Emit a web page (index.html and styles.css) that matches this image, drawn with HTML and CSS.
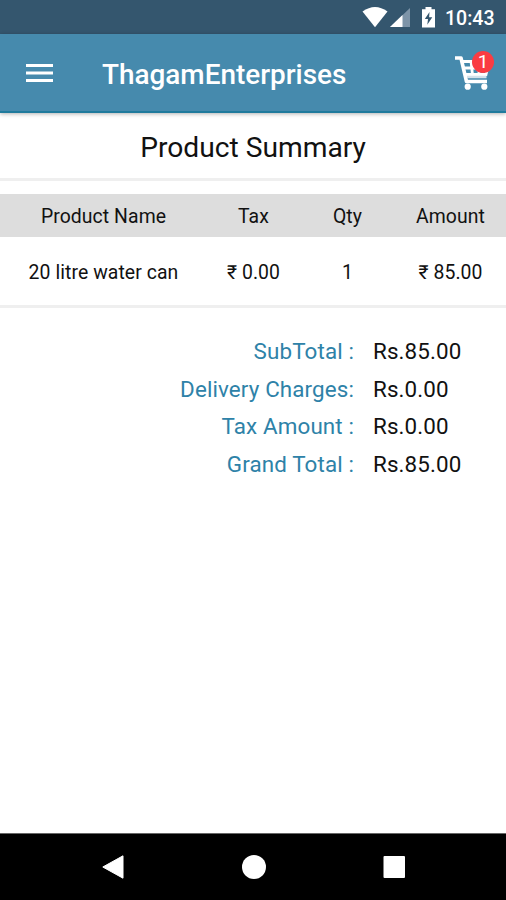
FILE: index.html
```
<!DOCTYPE html>
<html lang="en">
<head>
<meta charset="utf-8">
<meta name="viewport" content="width=device-width">
<title>ThagamEnterprises</title>
<link rel="stylesheet" href="styles.css">
</head>
<body>
<div class="status">
  <svg class="status-icons" width="76" height="34" viewBox="0 0 76 34" aria-hidden="true">
    <path fill="#fff" d="M0.500 11.500Q13 2.500 25.500 11.500L13 27.200Z"/>
    <path fill="#7d94a8" d="M48 8V27H28Z"/>
    <path fill="#fff" d="M40.500 15.100V27H28Z"/>
    <path fill="#fff" d="M63.500 7H69.500V9.300H73V27.500H60V9.300H63.500Z"/>
    <path fill="#34566e" d="M67.500 12L62.800 19H66L65.300 24.800L70.300 17.300H67.100Z"/>
  </svg>
  <span class="clock">10:43</span>
</div>
<header class="appbar">
  <svg class="menu" width="27" height="20" viewBox="0 0 27 20" aria-hidden="true"><path fill="#fff" d="M0 1H27V4H0ZM0 8.500H27V11.500H0ZM0 16H27V19H0Z"/></svg>
  <h1 class="brand">ThagamEnterprises</h1>
  <div class="cart">
    <svg width="36" height="36" viewBox="0 0 36 36" fill="none" stroke="#fff" aria-hidden="true">
      <path stroke-width="3.600" stroke-linejoin="round" d="M0 3H6L11.500 26.500H32"/>
      <path stroke-width="2.800" d="M8 6.500H34L31 19.500H11M9 13H33M16 6L17.500 20M24 6V20"/>
      <path stroke="#d4e2eb" stroke-width="2.500" d="M12 22H31.500"/>
      <circle cx="12.700" cy="31.700" r="3.100" fill="#fff" stroke="none"/>
      <circle cx="29.300" cy="31.700" r="3.100" fill="#fff" stroke="none"/>
    </svg>
    <span class="badge">1</span>
  </div>
</header>
<main class="content">
  <h2 class="title">Product Summary</h2>
  <div class="row head"><span>Product Name</span><span>Tax</span><span>Qty</span><span>Amount</span></div>
  <div class="row item"><span>20 litre water can</span><span>₹ 0.00</span><span>1</span><span>₹ 85.00</span></div>
  <dl class="totals">
    <dt>SubTotal :</dt><dd>Rs.85.00</dd>
    <dt>Delivery Charges:</dt><dd>Rs.0.00</dd>
    <dt>Tax Amount :</dt><dd>Rs.0.00</dd>
    <dt>Grand Total :</dt><dd>Rs.85.00</dd>
  </dl>
</main>
<nav class="navbar">
  <svg width="24" height="26" viewBox="0 0 24 26" aria-hidden="true"><path fill="#fff" stroke="#fff" stroke-linejoin="round" d="M1.800 13L22 1.800V24.200Z"/></svg>
  <svg width="24" height="26" viewBox="0 0 24 26" aria-hidden="true"><circle cx="12" cy="13" r="12" fill="#fff"/></svg>
  <svg width="24" height="26" viewBox="0 0 24 26" aria-hidden="true"><rect x="1.500" y="2" width="21.500" height="22" rx="1" fill="#fff"/></svg>
</nav>
</body>
</html>
```
FILE: styles.css
```
* { box-sizing: border-box; }
body {
  margin: 0;
  height: 900px;
  display: flex;
  flex-direction: column;
  background: #fff;
  color: #111;
  font-family: Roboto, "Noto Sans", sans-serif;
}
.status {
  height: 34px;
  display: flex;
  align-items: center;
  justify-content: flex-end;
  padding-right: 11px;
  background: #34566e;
  color: #fff;
}
.status-icons { margin-right: 7px; }
.clock { width: 50px; padding-top: 3px; font-size: 19.500px; font-weight: 500; line-height: 34px; white-space: nowrap; }
.appbar {
  position: relative;
  height: 79px;
  display: flex;
  align-items: center;
  padding: 0 15px 0 26px;
  background: #468aad;
  border-bottom: 2px solid #207b9d;
  box-shadow: 0 1px 4px rgba(0, 0, 0, .3);
  color: #fff;
}
.menu { margin-right: 49px; }
.brand { margin: 0; padding-top: 4px; font-size: 27.900px; font-weight: 500; line-height: 36px; }
.cart { position: relative; width: 36px; height: 36px; margin-left: auto; }
.cart svg { display: block; }
.badge {
  position: absolute;
  left: 17px;
  top: -4px;
  width: 22px;
  height: 22px;
  border-radius: 50%;
  background: #fa3c42;
  font-size: 19px;
  line-height: 22px;
  text-align: center;
}
.content { flex: 1; }
.title {
  margin: 0;
  height: 68px;
  border-bottom: 3px solid #efefef;
  font-size: 28.200px;
  font-weight: 400;
  line-height: 69px;
  text-align: center;
}
.row {
  display: grid;
  grid-template-columns: 207px 93px 95px 111px;
  text-align: center;
  font-size: 19.400px;
  letter-spacing: .08px;
}
.row span { white-space: nowrap; }
.head { margin-top: 13px; height: 43px; line-height: 45px; background: #ddd; }
.item { height: 71px; line-height: 71px; border-bottom: 3px solid #efefef; }
.totals {
  margin: 25px 0 0;
  display: grid;
  grid-template-columns: 354px 1fr;
  column-gap: 19px;
  grid-auto-rows: 37.500px;
  font-size: 22.400px;
  letter-spacing: .12px;
  line-height: 37.500px;
}
.totals dt { text-align: right; color: #2e82a8; }
.totals dd { margin: 0; }
.navbar {
  height: 67px;
  display: flex;
  align-items: center;
  justify-content: space-between;
  padding: 0 100px 0 101px;
  background: #000;
  border-top: 1px solid #666;
}
```
